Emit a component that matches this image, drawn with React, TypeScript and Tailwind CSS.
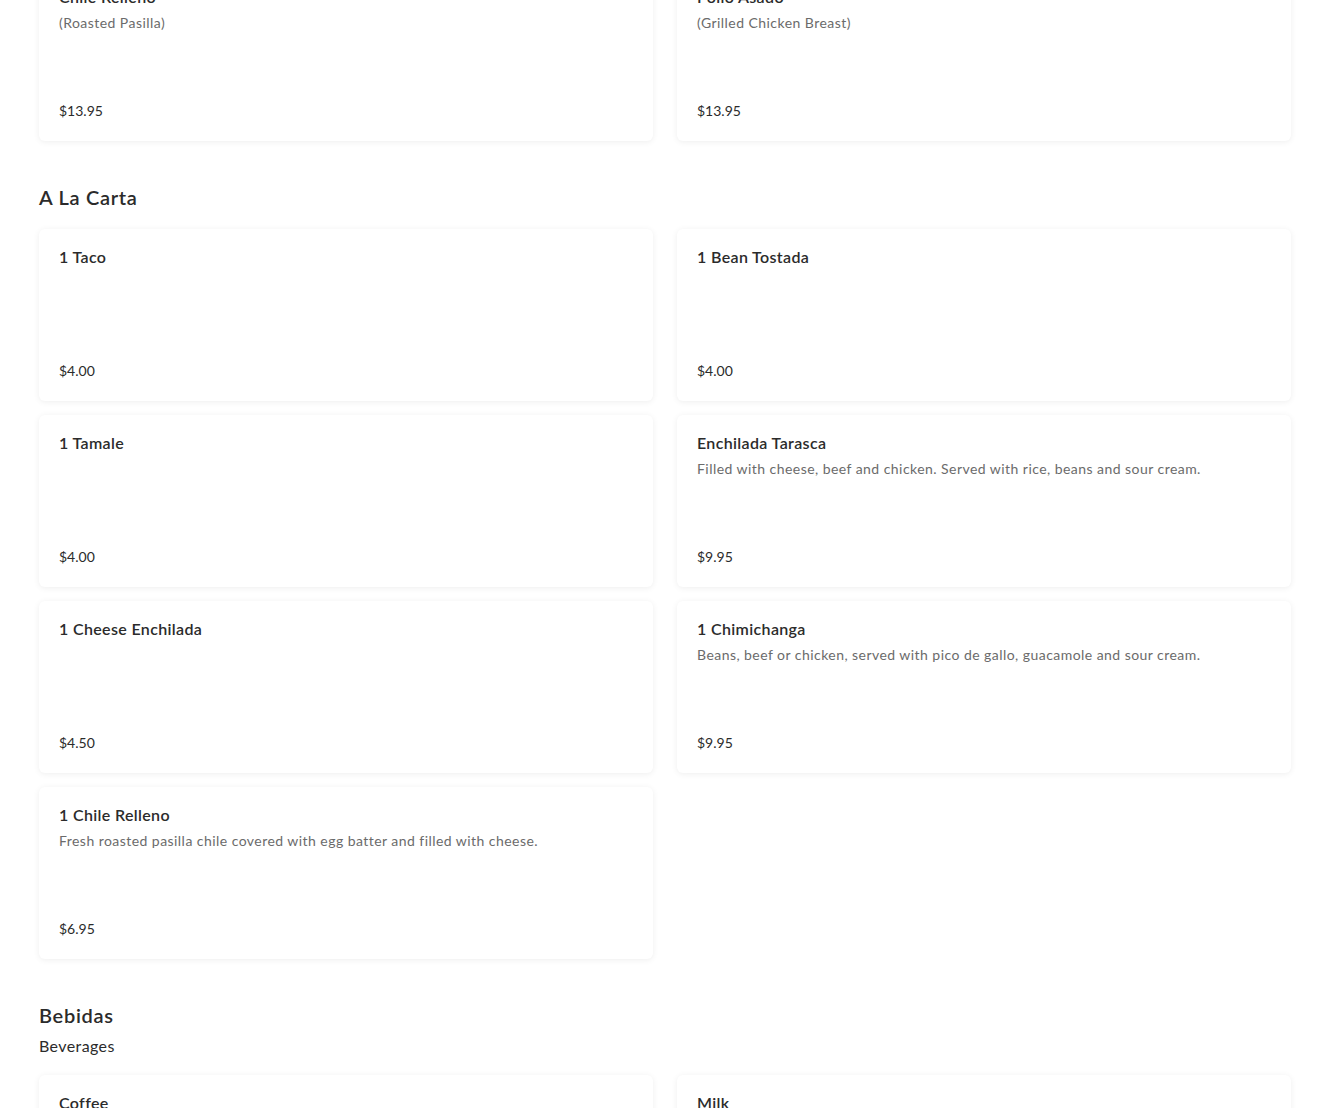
type Item = { name: string; desc?: string; price: string };

const top: Item[] = [
  { name: "Chile Relleno", desc: "(Roasted Pasilla)", price: "$13.95" },
  { name: "Pollo Asado", desc: "(Grilled Chicken Breast)", price: "$13.95" },
];

const carta: Item[] = [
  { name: "1 Taco", price: "$4.00" },
  { name: "1 Bean Tostada", price: "$4.00" },
  { name: "1 Tamale", price: "$4.00" },
  {
    name: "Enchilada Tarasca",
    desc: "Filled with cheese, beef and chicken. Served with rice, beans and sour cream.",
    price: "$9.95",
  },
  { name: "1 Cheese Enchilada", price: "$4.50" },
  {
    name: "1 Chimichanga",
    desc: "Beans, beef or chicken, served with pico de gallo, guacamole and sour cream.",
    price: "$9.95",
  },
  {
    name: "1 Chile Relleno",
    desc: "Fresh roasted pasilla chile covered with egg batter and filled with cheese.",
    price: "$6.95",
  },
];

const bebidas: Item[] = [
  { name: "Coffee", price: "" },
  { name: "Milk", price: "" },
];

function Card({ item }: { item: Item }) {
  return (
    <div className="flex h-[172px] flex-col rounded-md bg-white px-5 pt-[18px] pb-5 shadow-[0_1px_6px_rgba(0,0,0,0.07)]">
      <h3 className="text-[16px] leading-5 font-semibold tracking-[0.35px] text-[#2b2b2b]">{item.name}</h3>
      {item.desc && (
        <p className="mt-[6px] text-[14px] leading-5 tracking-[0.45px] text-[#6b6b6b]">{item.desc}</p>
      )}
      <div className="mt-auto text-[14px] leading-5 text-[#2b2b2b]">{item.price}</div>
    </div>
  );
}

function Grid({ items }: { items: Item[] }) {
  return (
    <div className="grid grid-cols-2 gap-x-6 gap-y-[14px]">
      {items.map((it) => (
        <Card key={it.name} item={it} />
      ))}
    </div>
  );
}

export default function App() {
  return (
    <main
      className="min-h-screen overflow-hidden bg-white px-[39px]"
      style={{ fontFamily: "Lato, 'Noto Sans', sans-serif" }}
    >
      <div className="-mt-[31px]">
        <Grid items={top} />
      </div>

      <section className="mt-[44px]">
        <h2 className="text-[20px] leading-6 font-semibold tracking-[0.7px] text-[#2b2b2b]">A La Carta</h2>
        <div className="mt-[20px]">
          <Grid items={carta} />
        </div>
      </section>

      <section className="mt-[44px]">
        <h2 className="text-[20px] leading-6 font-semibold tracking-[0.7px] text-[#2b2b2b]">Bebidas</h2>
        <p className="mt-[7px] text-[16px] leading-6 tracking-[0.4px] text-[#2b2b2b]">Beverages</p>
        <div className="mt-[17px]">
          <Grid items={bebidas} />
        </div>
      </section>
    </main>
  );
}
